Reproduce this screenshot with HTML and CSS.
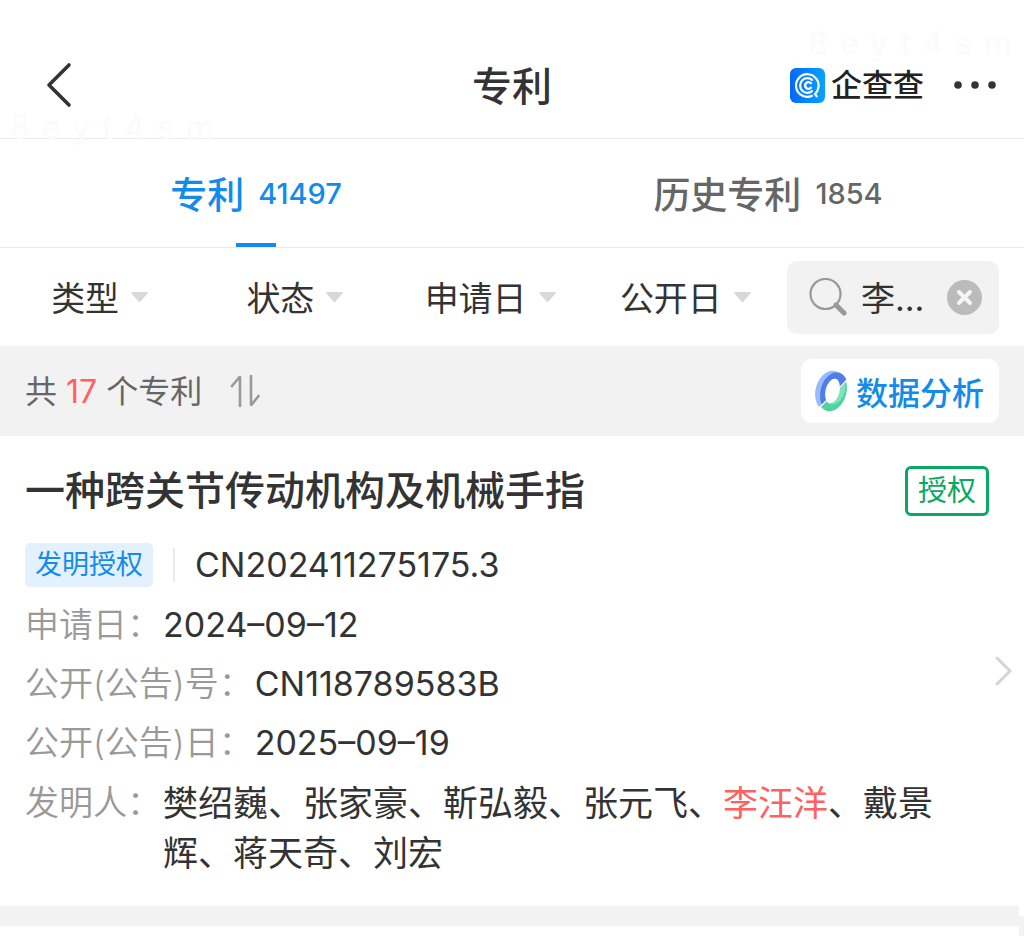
FILE: index.html
```html
<!DOCTYPE html>
<html lang="zh-CN">
<head>
  <meta charset="UTF-8">
  <meta name="viewport" content="width=device-width, initial-scale=1.0">
  <title>专利</title>
  <link rel="stylesheet" href="styles.css">
</head>
<body>
  <header class="header">
    <span class="watermark watermark-left" aria-hidden="true">8eyt4sm</span>
    <span class="watermark watermark-right" aria-hidden="true">8eyt4sm</span>
    <div class="header-side">
      <button class="icon-btn back" aria-label="返回">
        <svg width="28" height="46" viewBox="0 0 28 46" fill="none" stroke="#333" stroke-width="3.6" stroke-linecap="round" stroke-linejoin="round">
          <path d="M24 3 4 23l20 20"/>
        </svg>
      </button>
    </div>
    <h1>专利</h1>
    <div class="header-side header-right">
      <a href="#" class="brand">
        <svg width="35" height="35" viewBox="0 0 35 35" fill="none">
          <defs>
            <linearGradient id="brand-bg" x1="0" y1="0" x2="1" y2="0">
              <stop offset="0" stop-color="#0468fd"/>
              <stop offset="1" stop-color="#08a3ff"/>
            </linearGradient>
          </defs>
          <rect width="35" height="35" rx="6" fill="url(#brand-bg)"/>
          <g stroke="#fff" stroke-width="2.200" stroke-linecap="round">
            <path d="M22 27.800A11.300 11.300 0 1 1 28.200 20.500Q27.600 23.500 25 26l1.800 2.400"/>
            <path d="M22 11.800a7.300 7.300 0 1 0 0 11.400"/>
            <path d="M21 15.200a3.400 3.400 0 1 0 0 4.600" stroke-width="2.400"/>
          </g>
        </svg>
        <span>企查查</span>
      </a>
      <button class="icon-btn" aria-label="更多">
        <svg width="44" height="10" viewBox="0 0 44 10" fill="#333">
          <circle cx="5" cy="5" r="3.8"/>
          <circle cx="22" cy="5" r="3.8"/>
          <circle cx="39" cy="5" r="3.8"/>
        </svg>
      </button>
    </div>
  </header>

  <nav class="tabs">
    <a href="#" class="tab active">专利<span class="tab-count">41497</span></a>
    <a href="#" class="tab">历史专利<span class="tab-count">1854</span></a>
  </nav>

  <div class="filters">
    <button class="filter">类型<svg class="caret" viewBox="0 0 17 11"><path d="M2 0h13q3 0 1 2L9.500 9.500q-1 1-2 0L1 2Q-1 0 2 0z"/></svg></button>
    <button class="filter">状态<svg class="caret" viewBox="0 0 17 11"><path d="M2 0h13q3 0 1 2L9.500 9.500q-1 1-2 0L1 2Q-1 0 2 0z"/></svg></button>
    <button class="filter">申请日<svg class="caret" viewBox="0 0 17 11"><path d="M2 0h13q3 0 1 2L9.500 9.500q-1 1-2 0L1 2Q-1 0 2 0z"/></svg></button>
    <button class="filter">公开日<svg class="caret" viewBox="0 0 17 11"><path d="M2 0h13q3 0 1 2L9.500 9.500q-1 1-2 0L1 2Q-1 0 2 0z"/></svg></button>
    <div class="search">
      <svg width="38" height="38" viewBox="0 0 38 38" fill="none" stroke="#999">
        <circle cx="16.500" cy="16" r="15" stroke-width="2.200"/>
        <path d="M27 27l8 8" stroke-width="5" stroke-linecap="round"/>
      </svg>
      <input type="text" value="李..." aria-label="搜索">
      <button class="icon-btn" aria-label="清除">
        <svg width="35" height="35" viewBox="0 0 35 35">
          <circle cx="17.500" cy="17.500" r="17.500" fill="#bbb"/>
          <path d="M12 12l11 11M23 12 12 23" stroke="#f5f5f5" stroke-width="4" stroke-linecap="round"/>
        </svg>
      </button>
    </div>
  </div>

  <div class="summary">
    <p>共 <em>17</em> 个专利</p>
    <button class="icon-btn sort" aria-label="排序">
      <svg width="30" height="34" viewBox="0 0 30 34" fill="none" stroke="#999" stroke-width="2.600" stroke-linejoin="bevel" stroke-linecap="round">
        <path d="M2 12 10 2.500V32M21 2v29.500L28.500 22"/>
      </svg>
    </button>
    <button class="analysis">
      <svg width="34" height="42" viewBox="0 0 34 42">
        <defs>
          <clipPath id="ring-top"><path d="M-4-4h40v10L4.500 37.500-4 44z"/></clipPath>
          <clipPath id="ring-bottom"><path d="M36 8 6 38v8h34z"/></clipPath>
        </defs>
        <g clip-path="url(#ring-top)">
          <ellipse cx="16" cy="21" rx="14.500" ry="20.500" transform="rotate(14 16 21)" fill="#9bb9fb"/>
          <ellipse cx="20" cy="22" rx="13.500" ry="20" transform="rotate(14 20 22)" fill="#4d7ee9"/>
        </g>
        <g clip-path="url(#ring-bottom)">
          <ellipse cx="18" cy="21" rx="14.500" ry="20.500" transform="rotate(14 18 21)" fill="#4fd29b"/>
          <ellipse cx="20" cy="19" rx="11" ry="15.500" transform="rotate(14 20 19)" fill="#7fe4bd"/>
        </g>
        <ellipse cx="18.500" cy="21" rx="7" ry="12.500" transform="rotate(14 18.500 21)" fill="#fff"/>
      </svg>
      数据分析
    </button>
  </div>

  <main class="card">
    <div class="card-head">
      <h2>一种跨关节传动机构及机械手指</h2>
      <span class="status">授权</span>
    </div>
    <div class="patent-no">
      <span class="tag">发明授权</span>
      <span class="number">CN202411275175.3</span>
    </div>
    <dl class="info">
      <div class="row"><dt>申请日：</dt><dd>2024–09–12</dd></div>
      <div class="row"><dt>公开(公告)号：</dt><dd>CN118789583B</dd></div>
      <div class="row"><dt>公开(公告)日：</dt><dd>2025–09–19</dd></div>
      <div class="row"><dt>发明人：</dt><dd class="names">樊绍巍、张家豪、靳弘毅、张元飞、<em>李汪洋</em>、戴景辉、蒋天奇、刘宏</dd></div>
    </dl>
    <a href="#" class="more" aria-label="查看详情">
      <svg width="18" height="30" viewBox="0 0 18 30" fill="none" stroke="#d4d4d4" stroke-width="3" stroke-linecap="round" stroke-linejoin="round">
        <path d="M3 2l13 13L3 28"/>
      </svg>
    </a>
  </main>

  <div class="divider"><span></span><span></span></div>
</body>
</html>
```
FILE: styles.css
```css
:root {
  --blue: #128bed;
  --red: #ff6060;
  --green: #0aa961;
  --text: #333;
  --text-mid: #666;
  --text-light: #999;
  --line: #eaeaea;
  --bg-gray: #f2f2f2;
}
* { box-sizing: border-box; margin: 0; padding: 0; }
body {
  font-family: Inter, "Noto Sans CJK SC", sans-serif;
  background: #fff;
  color: var(--text);
}
a { color: inherit; text-decoration: none; }
em { font-style: normal; color: var(--red); }
button, input {
  font-family: inherit;
  color: inherit;
  background: none;
  border: none;
}
button { cursor: pointer; }
svg { display: block; flex: none; }
.icon-btn { display: flex; }

/* header */
.header {
  position: relative;
  display: flex;
  align-items: center;
  padding: 32px 27px 0;
  height: 139px;
  border-bottom: 1px solid var(--line);
}
.header h1 {
  padding-top: 4px;
  font-size: 40px;
  line-height: 60px;
  font-weight: 500;
}
.header-side {
  flex: 1;
  display: flex;
  align-items: center;
}
.back { margin-left: 18px; }
.header-right {
  justify-content: flex-end;
  gap: 29px;
}
.brand {
  display: flex;
  align-items: center;
  gap: 6px;
  color: #222;
  font-size: 31px;
  line-height: 40px;
  font-weight: 500;
}
.watermark {
  position: absolute;
  color: #fbfbfb;
  font-size: 32px;
  line-height: 40px;
  letter-spacing: 12px;
}
.watermark-left { left: 10px; bottom: -10px; }
.watermark-right { right: 0; top: 24px; }

/* tabs */
.tabs {
  display: flex;
  border-bottom: 1px solid var(--line);
}
.tab {
  flex: 1;
  display: flex;
  flex-wrap: wrap;
  align-items: center;
  align-content: space-between;
  justify-content: center;
  height: 108px;
  font-size: 37px;
  font-weight: 500;
  color: var(--text-mid);
}
.tab::after, .tab::before {
  content: "";
  flex: 0 0 100%;
  height: 4px;
}
.tab.active { color: var(--blue); }
.tab.active::after {
  background: linear-gradient(var(--blue), var(--blue)) center / 40px 4px no-repeat;
}
.tab-count {
  margin-left: 14px;
  font-size: 29px;
}

/* filters */
.filters {
  display: flex;
  align-items: center;
  height: 98px;
  padding: 0 25px 0 2px;
}
.filter {
  flex: 1;
  display: flex;
  align-items: center;
  justify-content: center;
  gap: 12px;
  padding-top: 3px;
  font-size: 34px;
  line-height: 50px;
}
.caret {
  width: 17px;
  height: 11px;
  margin-bottom: 3px;
  fill: #d8d8d8;
}
.search {
  display: flex;
  align-items: center;
  width: 212px;
  height: 73px;
  margin-left: 4px;
  padding: 0 17px 0 22px;
  border-radius: 10px;
  background: var(--bg-gray);
}
.search input {
  flex: 1;
  min-width: 0;
  margin: 0 12px 0 14px;
  padding-top: 3px;
  font-size: 34px;
  line-height: 50px;
  outline: none;
}

/* summary */
.summary {
  display: flex;
  align-items: center;
  height: 90px;
  padding: 0 25px;
  background: var(--bg-gray);
  color: var(--text-mid);
  font-size: 32px;
}
.summary p { padding-bottom: 4px; }
.sort { margin-left: 28px; }
.analysis {
  display: flex;
  align-items: center;
  gap: 8px;
  height: 64px;
  margin-left: auto;
  padding: 0 15px 0 13px;
  border-radius: 10px;
  background: #fff;
  color: var(--blue);
  font-size: 32px;
  font-weight: 500;
}

/* patent card */
.card {
  position: relative;
  padding: 30px 35px 28px 25px;
}
.card-head {
  display: flex;
  align-items: center;
  justify-content: space-between;
}
.card h2 {
  font-size: 40px;
  line-height: 50px;
  font-weight: 500;
}
.status {
  padding: 0 10px;
  border: 3px solid var(--green);
  border-radius: 6px;
  color: var(--green);
  font-size: 29px;
  line-height: 44px;
}
.patent-no {
  display: flex;
  align-items: center;
  margin-top: 23px;
  height: 52px;
}
.tag {
  padding: 0 10px;
  border-radius: 5px;
  background: #e3f1fd;
  color: var(--blue);
  font-size: 27px;
  line-height: 44px;
}
.number {
  margin-left: 20px;
  padding-left: 22px;
  background: linear-gradient(var(--line), var(--line)) left center / 2px 34px no-repeat;
  font-size: 34px;
  line-height: 50px;
}
.info {
  font-size: 34px;
  line-height: 50px;
}
.row {
  display: flex;
  padding-top: 9px;
}
.row:last-child { padding-top: 10px; }
.row dt {
  flex: none;
  padding-right: 2px;
  color: var(--text-light);
  font-weight: 350;
}
.row dd {
  flex: 1;
  padding-right: 50px;
}
.row .names { font-size: 35px; }
.more {
  position: absolute;
  right: 12px;
  top: 50%;
  transform: translateY(-50%);
}

.divider {
  display: grid;
  grid-template-columns: 1fr 5px;
}
.divider span {
  height: 20px;
  background: var(--bg-gray);
}
.divider span:last-child { margin-top: 10px; }
```
